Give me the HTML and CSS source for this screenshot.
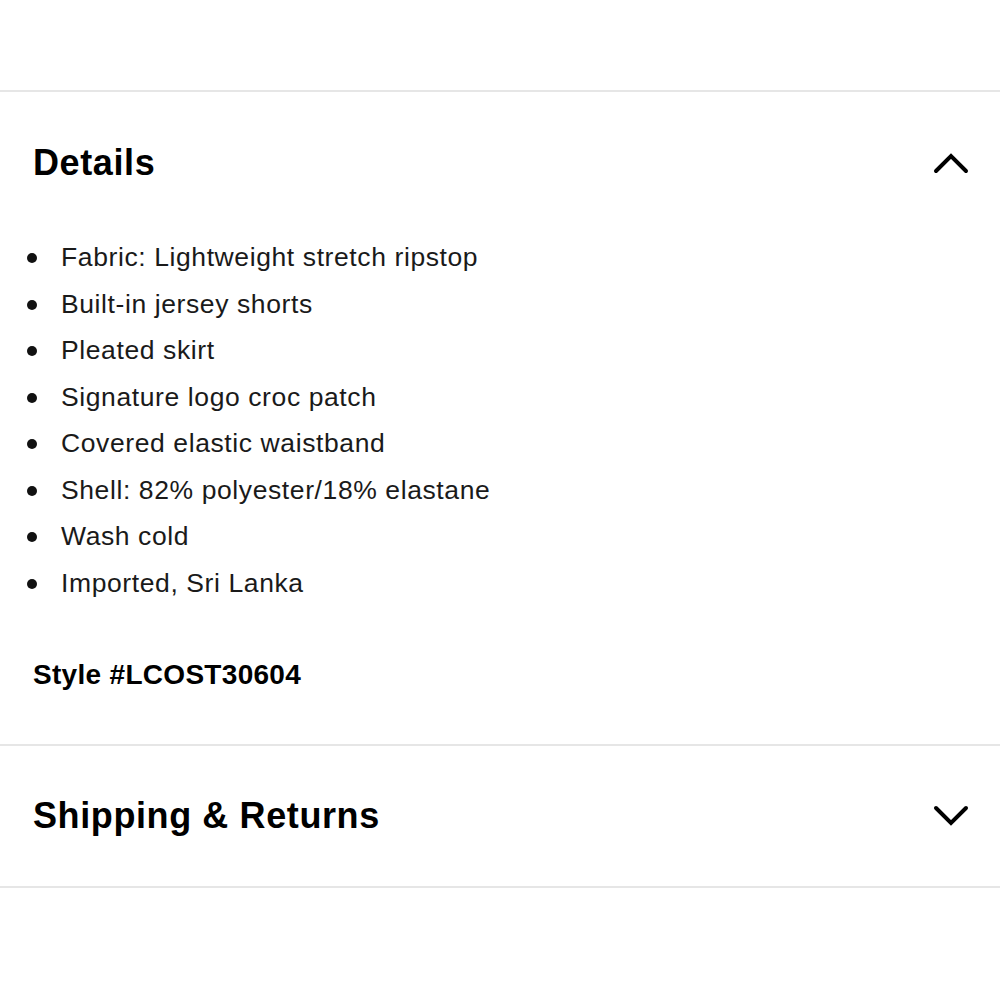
FILE: index.html
```html
<!DOCTYPE html>
<html>
<head>
<meta charset="utf-8">
<link rel="stylesheet" href="styles.css">
</head>
<body>
<div class="page">
  <div class="top-space"></div>
  <section class="acc">
    <div class="acc-head">
      <h2 class="acc-title">Details</h2>
      <svg class="chev" width="36" height="22" viewBox="0 0 36 22"><path d="M3 19 L18 4 L33 19" fill="none" stroke="#000" stroke-width="4" stroke-linecap="round" stroke-linejoin="miter"/></svg>
    </div>
    <div class="acc-body">
      <ul class="list">
        <li>Fabric: Lightweight stretch ripstop</li>
        <li>Built-in jersey shorts</li>
        <li>Pleated skirt</li>
        <li>Signature logo croc patch</li>
        <li>Covered elastic waistband</li>
        <li>Shell: 82% polyester/18% elastane</li>
        <li>Wash cold</li>
        <li>Imported, Sri Lanka</li>
      </ul>
      <p class="style-no">Style #LCOST30604</p>
    </div>
  </section>
  <section class="acc acc-last">
    <div class="acc-head acc-head-closed">
      <h2 class="acc-title">Shipping &amp; Returns</h2>
      <svg class="chev" width="36" height="22" viewBox="0 0 36 22"><path d="M3 3 L18 18 L33 3" fill="none" stroke="#000" stroke-width="4" stroke-linecap="round" stroke-linejoin="miter"/></svg>
    </div>
  </section>
</div>
</body>
</html>
```
FILE: styles.css
```css
* { box-sizing: border-box; }
html, body { margin: 0; padding: 0; background: #fff; }
body {
  font-family: "Liberation Sans", Arial, sans-serif;
  color: #111;
}
.top-space { height: 90px; }
.acc { border-top: 2px solid #e6e6e6; }
.acc-last { border-bottom: 2px solid #e6e6e6; }
.acc-head {
  height: 142px;
  display: flex;
  align-items: center;
  justify-content: space-between;
  padding: 0 31px 0 33px;
}
.acc-head-closed { height: 140px; }
.acc-title {
  margin: 0;
  font-size: 36px;
  font-weight: 700;
  color: #000;
  letter-spacing: 0.6px;
}
.chev { display: block; }
.acc-body { padding: 0 0 54px 0; }
.list {
  list-style: none;
  margin: 0;
  padding: 0 0 0 27px;
}
.list li {
  position: relative;
  height: 46.5px;
  line-height: 46.5px;
  font-size: 26.5px;
  letter-spacing: 0.6px;
  color: #1a1a1a;
  padding-left: 34px;
}
.list li::before {
  content: "";
  position: absolute;
  left: 0;
  top: 19px;
  width: 10px;
  height: 10px;
  border-radius: 50%;
  background: #111;
}
.style-no {
  margin: 54px 0 0 33px;
  height: 30px;
  line-height: 30px;
  font-size: 28px;
  font-weight: 700;
  letter-spacing: 0.3px;
  color: #000;
}
```
